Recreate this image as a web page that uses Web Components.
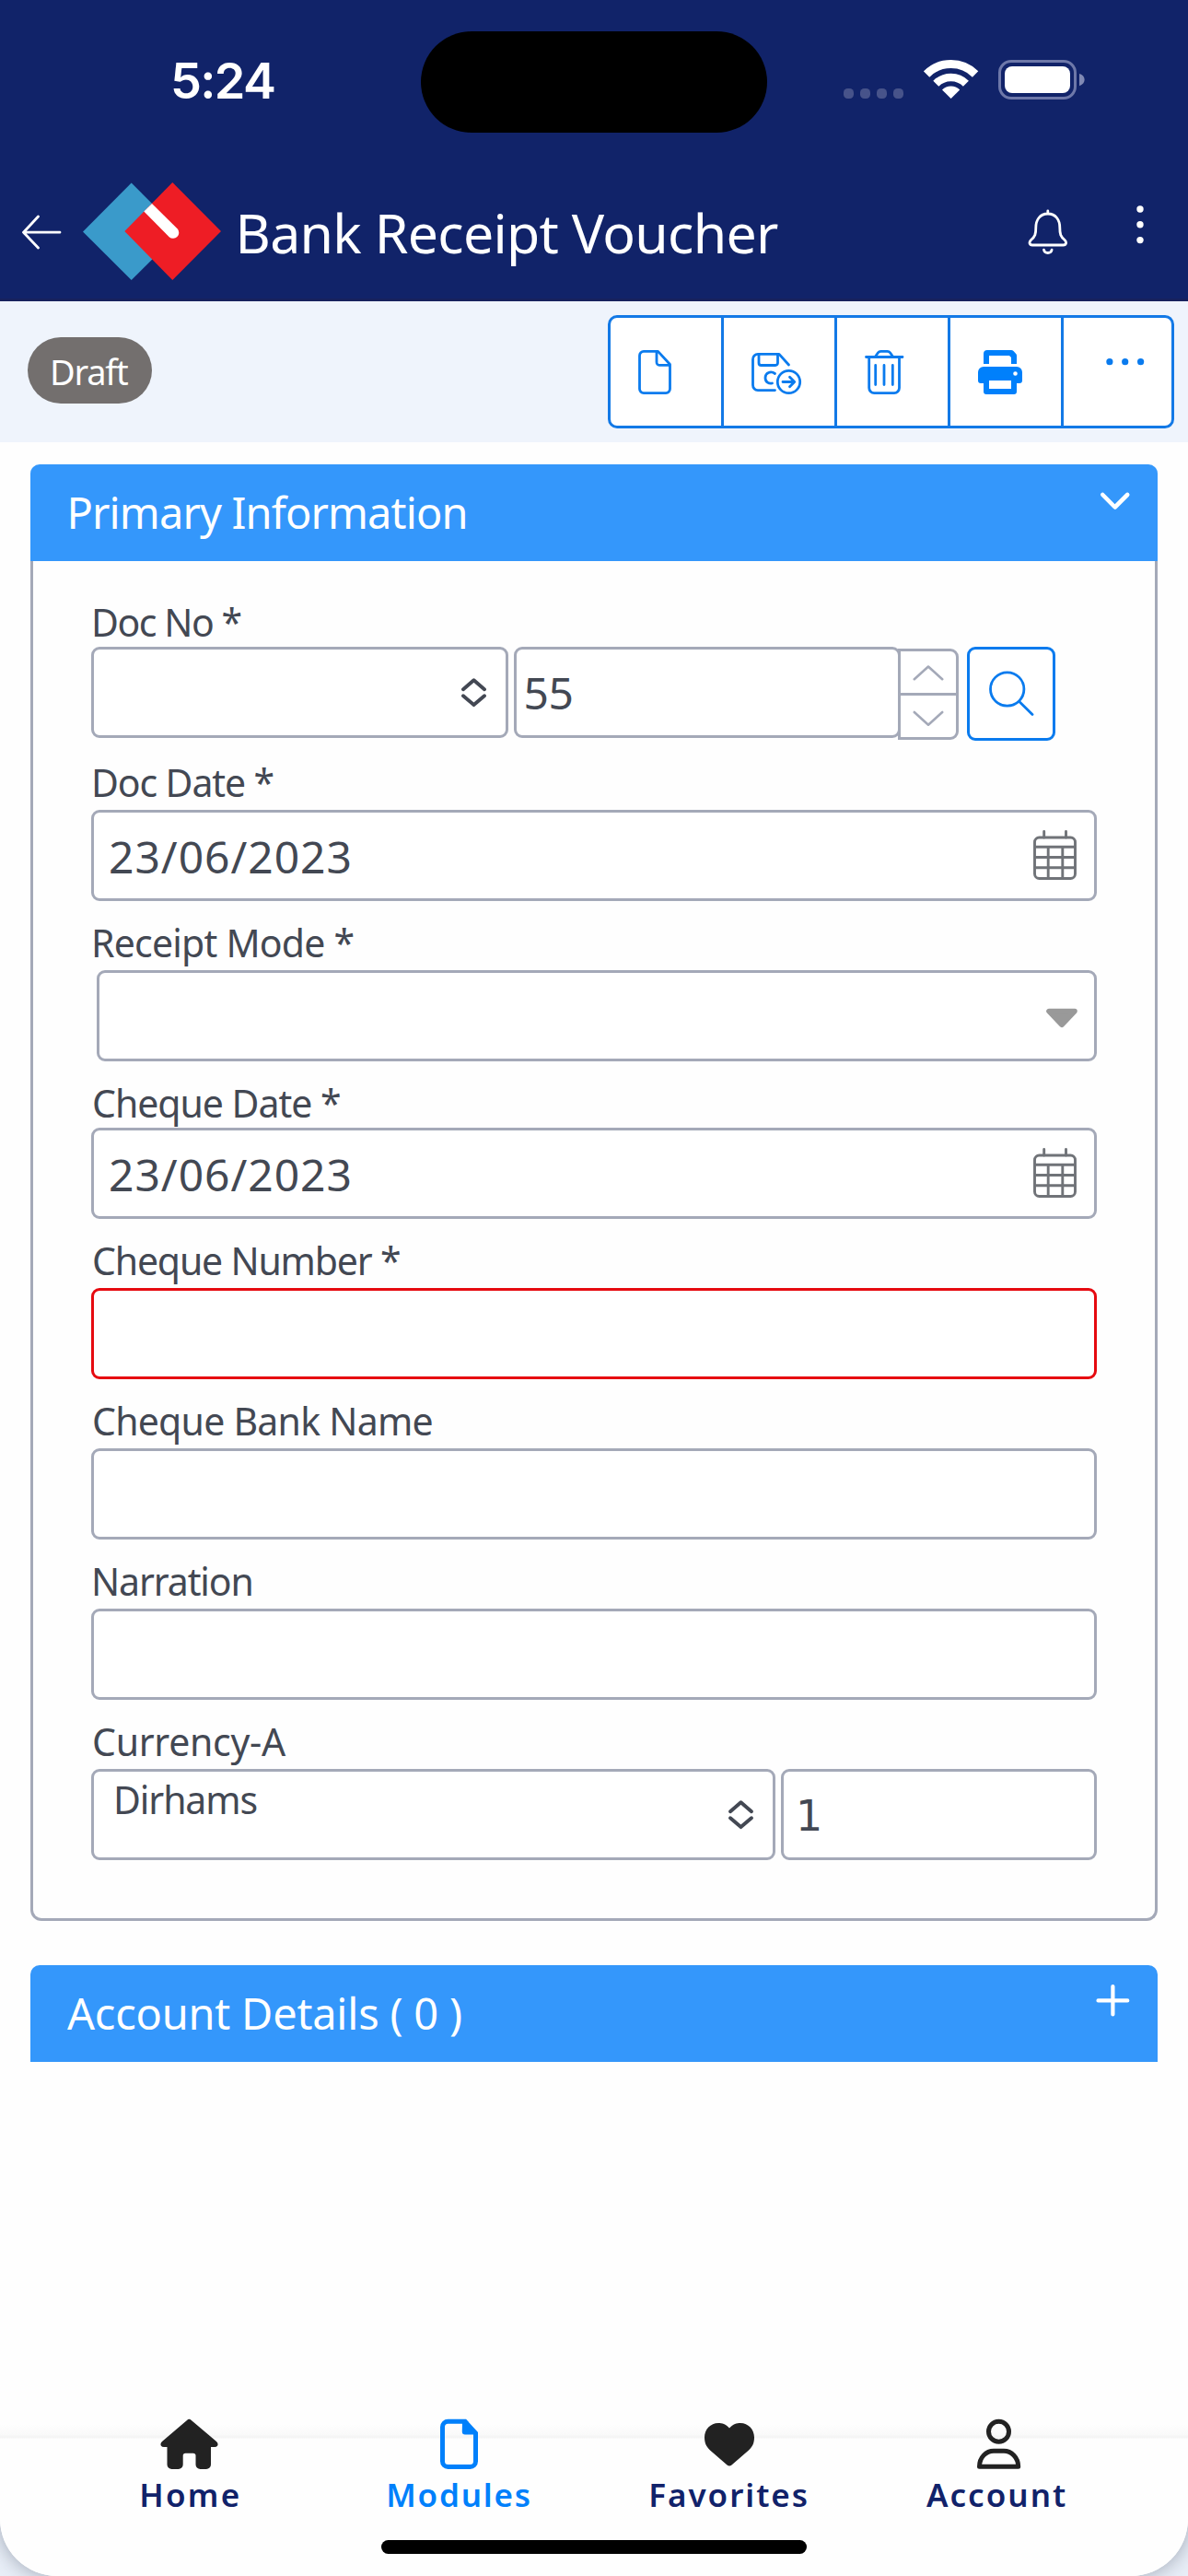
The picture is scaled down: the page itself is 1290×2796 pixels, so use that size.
<!DOCTYPE html>
<html lang="en">
<head>
<meta charset="utf-8">
<title>Bank Receipt Voucher</title>
<style>
  html, body { margin: 0; padding: 0; }
  body { width: 1290px; height: 2796px; overflow: hidden; background: #e9eff8; font-family: "Noto Sans", sans-serif; color: #434853; }
</style>
</head>
<body>
<voucher-app>
  <status-bar></status-bar>
  <app-bar>Bank Receipt Voucher</app-bar>
  <action-bar>Draft</action-bar>
  <section-card heading="Primary Information" w="429" icon="chevron" open>
    <form-field label="Doc No *" w="159.5" gap="4" first>
      <input-box style="width:453px"><ui-icon name="sort" style="margin:30px 20px 0 auto"></ui-icon></input-box>
      <input-box style="width:420px;margin-left:6px"><fit-text size="48" lh="60" w="49" style="margin:16px 0 0 10.5px">55</fit-text></input-box>
      <number-spinner></number-spinner>
      <search-button></search-button>
    </form-field>
    <form-field label="Doc Date *" w="194.5" style="--top:23px">
      <input-box><fit-text size="48" lh="60" w="259.5" style="margin:17px 0 0 18px">23/06/2023</fit-text><ui-icon name="calendar" style="margin:18px 17px 0 auto"></ui-icon></input-box>
    </form-field>
    <form-field label="Receipt Mode *" w="281.5">
      <input-box style="margin-left:6px"><ui-icon name="caret" style="margin:37px 17px 0 auto"></ui-icon></input-box>
    </form-field>
    <form-field label="Cheque Date *" w="267" gap="4">
      <input-box><fit-text size="48" lh="60" w="259.5" style="margin:17px 0 0 18px">23/06/2023</fit-text><ui-icon name="calendar" style="margin:18px 17px 0 auto"></ui-icon></input-box>
    </form-field>
    <form-field label="Cheque Number *" w="332"><input-box invalid></input-box></form-field>
    <form-field label="Cheque Bank Name" w="367.5"><input-box></input-box></form-field>
    <form-field label="Narration" w="171.5"><input-box></input-box></form-field>
    <form-field label="Currency-A" w="209">
      <input-box style="width:743px"><fit-text size="41" lh="48" w="152.5" style="margin:5px 0 0 24px">Dirhams</fit-text><ui-icon name="sort" style="margin:30px 20px 0 auto"></ui-icon></input-box>
      <input-box style="width:343px;margin-left:6px"><fit-text size="46" lh="60" w="23" family="DejaVu Sans" style="margin:17px 0 0 18px">1</fit-text></input-box>
    </form-field>
  </section-card>
  <section-card heading="Account Details ( 0 )" w="428" icon="plus" style="margin-top:48px"></section-card>
  <tab-bar>
    <tab-item icon="home" label="Home" w="104.5" shift="1"></tab-item>
    <tab-item icon="module" label="Modules" w="152.5" active></tab-item>
    <tab-item icon="heart" label="Favorites" w="168.5"></tab-item>
    <tab-item icon="person" label="Account" w="151" shift="-3"></tab-item>
  </tab-bar>
</voucher-app>

<script>
const define = (name, html, setup) => {
  customElements.define(name, class extends HTMLElement {
    connectedCallback() {
      if (this.shadowRoot) return;
      const root = this.attachShadow({ mode: 'open' });
      root.innerHTML = typeof html === 'function' ? html(this) : html;
      if (setup) setup(this, root);
    }
  });
};

/* Icon set: [viewBox, markup]; each icon is drawn at one pixel per unit. */
const ICONS = {
  back: ['22 230 46 44', '<path d="M65 252.2H25.5M41.5 235L25.5 252.2L41.5 269" fill="none" stroke="#fff" stroke-width="2.8" stroke-linecap="round" stroke-linejoin="round"/>'],
  logo: ['89 196 152 110', '<path d="M142.7 198.5L195.500 251.500L142.700 304L90 251.500Z" fill="#3a9aca"/><path d="M187.300 198L240 251L187.300 304L135.300 251Z" fill="#ee1d25"/><path d="M156.300 229.600L165 221L192.600 248.300A6.300 6.300 0 0 1 183.700 257.200Z" fill="#fff"/>'],
  bell: ['1114 226 48 52', '<g fill="none" stroke="#fff" stroke-width="2.8" stroke-linecap="round"><path d="M1137.800 229V232M1137.800 232C1129 232 1124.800 239 1124.800 247C1124.800 254 1124 257 1119.500 260.500C1117 263 1117.800 266 1121 266H1154.600C1157.800 266 1158.600 263 1156.100 260.500C1151.600 257 1150.800 254 1150.800 247C1150.800 239 1146.600 232 1137.800 232Z"/><path d="M1133.500 271.200C1134.500 275.600 1141.100 275.600 1142.100 271.200"/></g>'],
  kebab: ['1233 222 10 44', '<g fill="#fff"><circle cx="1238" cy="227" r="3.700"/><circle cx="1238" cy="243.800" r="3.700"/><circle cx="1238" cy="260.600" r="3.700"/></g>'],
  file: ['691 378 40 52', '<path d="M713 381.400H699A4.500 4.500 0 0 0 694.500 386V422A4.500 4.500 0 0 0 699 426.600H723A4.500 4.500 0 0 0 727.500 422V395.500L714.500 381.400H713V393A3 3 0 0 0 716 396.300H727.300" fill="none" stroke="#0a7bee" stroke-width="2.800" stroke-linejoin="round"/>'],
  save: ['814 380 58 50', '<g fill="none" stroke="#0a7bee" stroke-width="2.800" stroke-linecap="round" stroke-linejoin="round"><path d="M841.500 423.600H823A5.500 5.500 0 0 1 817.500 418V390A5.500 5.500 0 0 1 823 384.400H846L856.500 396"/><path d="M824 385V394A2.500 2.500 0 0 0 826.500 396.500H842A2.500 2.500 0 0 0 844.500 394V385"/><path d="M841.500 405.500C837 402.200 831 404.500 831 410C831 415 835 416.800 838.500 416"/><circle cx="856.500" cy="414.500" r="12.200"/><path d="M850 414.500H862.500M857.500 409.200L862.700 414.500L857.500 419.800"/></g>'],
  trash: ['937 378 46 52', '<g fill="none" stroke="#0a7bee" stroke-width="2.800" stroke-linecap="round" stroke-linejoin="round"><path d="M940.500 387.500H980M950.500 387L953.500 382.800Q954.500 381.400 956.500 381.400H963.500Q965.500 381.400 966.500 382.800L969.500 387M943.700 388V421A5.600 5.600 0 0 0 949.300 426.600H970.900A5.600 5.600 0 0 0 976.500 421V388M950.700 396.500V417.500M960 396.500V417.500M969.300 396.500V417.500"/></g>'],
  printer: ['1060 378 52 52', '<g fill="#0080fb"><path d="M1068 395V384A4 4 0 0 1 1072 380H1098Q1099.500 380 1100.500 381L1103 383.700Q1104 384.700 1104 386V395H1098V388L1096 386H1074V395Z"/><path fill-rule="evenodd" d="M1068 398H1104A6 6 0 0 1 1110 404V413A3 3 0 0 1 1107 416H1104V425A3 3 0 0 1 1101 428H1071A3 3 0 0 1 1068 425V416H1065A3 3 0 0 1 1062 413V404A6 6 0 0 1 1068 398ZM1074 413V422H1098V413ZM1102.500 403.200A2.300 2.300 0 1 0 1102.500 407.800A2.300 2.300 0 1 0 1102.500 403.200Z"/></g>'],
  dots: ['1201 388 42 10', '<g fill="#0a7bee"><circle cx="1204.900" cy="392.700" r="3.600"/><circle cx="1221.700" cy="392.700" r="3.600"/><circle cx="1238.600" cy="392.700" r="3.600"/></g>'],
  chevron: ['1192 531 38 26', '<path d="M1197.300 537L1210.700 550.500L1224.200 537" fill="none" stroke="#fff" stroke-width="4.600" stroke-linecap="round" stroke-linejoin="round"/>'],
  plus: ['1188 2152 40 38', '<path d="M1192.500 2171.400H1224.300M1208.400 2156V2186.500" fill="none" stroke="#fff" stroke-width="4.200" stroke-linecap="round"/>'],
  sort: ['500 735 29 33', '<path d="M503 748.200L514.500 738.300L526 748.200M503 755.200L514.500 765.100L526 755.200" fill="none" stroke="#434853" stroke-width="3.900" stroke-linecap="round" stroke-linejoin="round"/>'],
  up: ['990 720 36 20', '<path d="M992.800 737.200L1008 723.500L1023.200 737.200" fill="none" stroke="#a4a9b8" stroke-width="2.600" stroke-linecap="round" stroke-linejoin="round"/>'],
  down: ['990 770 36 20', '<path d="M992.800 773L1008 786.700L1023.200 773" fill="none" stroke="#a4a9b8" stroke-width="2.600" stroke-linecap="round" stroke-linejoin="round"/>'],
  search: ['1072 727 53 52', '<g fill="none" stroke="#0a7bee" stroke-width="2.800" stroke-linecap="round"><circle cx="1093.700" cy="748" r="18.200"/><path d="M1106.800 761.500L1121 775.600"/></g>'],
  calendar: ['1121 900 50 56', '<g fill="none" stroke="#707378" stroke-width="2.900"><rect x="1123.500" y="909" width="44" height="44.500" rx="5"/><path d="M1123.500 919.300H1167.500M1123.500 930.500H1167.500M1123.500 941.800H1167.500M1138.200 919V953.500M1153.800 919V953.500"/><path d="M1133.700 902.500V909M1157.500 902.500V909" stroke-linecap="round"/></g>'],
  caret: ['1135 1093 36 24', '<path d="M1139 1097.500H1167L1153 1112.300Z" fill="#999" stroke="#999" stroke-width="5.600" stroke-linejoin="round"/>'],
  wifi: ['1003 63 60 46', '<g fill="none" stroke="#fff"><path d="M1006.100 80.500A37.500 37.500 0 0 1 1059.100 80.500" stroke-width="9"/><path d="M1016.300 90.700A23 23 0 0 1 1048.900 90.700" stroke-width="8.500"/></g><path d="M1032.600 107L1023 97.600A13.500 13.500 0 0 1 1042.200 97.600Z" fill="#fff"/>'],
  battery: ['1082 63 98 47', '<rect x="1085.500" y="66.500" width="82" height="40" rx="12.500" fill="none" stroke="#6e78a9" stroke-width="3"/><rect x="1091" y="72" width="71" height="29" rx="8" fill="#fff"/><path d="M1172 80C1179.500 82 1179.500 91 1172 93.200Z" fill="#8089b4"/>'],
  home: ['173 2625 65 57', '<path d="M203 2626.900Q205.400 2624.700 207.800 2626.900L235 2650Q237.500 2652.500 236 2654.800Q235.200 2656 233 2656H229V2675A5 5 0 0 1 224 2680H217.500A5 5 0 0 1 212.500 2675V2665.500Q212.500 2662.700 209.700 2662.700H201.500Q198.700 2662.700 198.700 2665.500V2675A5 5 0 0 1 193.700 2680H186.500A5 5 0 0 1 181.500 2675V2656H178Q175.800 2656 175 2654.800Q173.500 2652.500 176 2650Z" fill="#222"/>'],
  module: ['476 2625 45 57', '<path d="M504 2628.300H486.500A6 6 0 0 0 480.500 2634.300V2671.500A6 6 0 0 0 486.500 2677.500H510.500A6 6 0 0 0 516.500 2671.500V2641L505 2628.300Z" fill="none" stroke="#0080fb" stroke-width="5"/><path d="M502 2628H505.500L518 2641.500V2642.500H505A3.200 3.200 0 0 1 501.800 2639.300Z" fill="#0080fb"/>'],
  heart: ['762 2625 58 57', '<path d="M791 2635.500C795 2631 799 2630 803 2630C811.500 2630 818 2637 818 2645.500C818 2652 816 2655.500 812 2659.500L793.500 2675.500Q791 2677.500 788.500 2675.500L770 2659.500C766 2655.500 764 2652 764 2645.500C764 2637 770.500 2630 779 2630C783 2630 787 2631 791 2635.500Z" fill="#222"/>'],
  person: ['1058 2625 51 57', '<g fill="none" stroke="#222" stroke-width="5" stroke-linejoin="round"><circle cx="1083.500" cy="2639.200" r="11"/><path d="M1062.500 2677.300C1062.500 2667 1070 2660.200 1078 2660.200H1089C1097 2660.200 1104.700 2667 1104.700 2677.300Z"/></g>']
};

define('ui-icon', el => {
  const [box, art] = ICONS[el.getAttribute('name')];
  const [, , w, h] = box.split(' ');
  return `<style>:host{display:block;flex:none;width:${w}px;height:${h}px}svg{display:block}</style>
    <svg width="${w}" height="${h}" viewBox="${box}" aria-hidden="true">${art}</svg>`;
});

/* Text whose tracking is adjusted so that its ink fills the given width. */
const pen = document.createElement('canvas').getContext('2d');
define('fit-text', '<style>:host{display:block;flex:none;white-space:nowrap}span{display:inline-block;white-space:pre}</style><span><slot></slot></span>', (el, root) => {
  const a = n => el.getAttribute(n);
  const text = el.textContent, size = +a('size'), w = +a('w');
  const font = `${a('weight') || 400} ${size}px "${a('family') || 'Noto Sans'}", sans-serif`;
  pen.font = font;
  const m = pen.measureText(text);
  const ink = m.actualBoundingBoxLeft + m.actualBoundingBoxRight;
  const span = root.querySelector('span');
  span.style.font = font;
  span.style.lineHeight = +a('lh') + 2 + 'px';
  span.style.marginLeft = m.actualBoundingBoxLeft + 'px';
  if (text.length > 1) span.style.letterSpacing = (w - ink) / (text.length - 1) + 'px';
  el.style.width = w + 'px';
  el.style.height = a('lh') + 'px';
});

define('voucher-app', `<style>
  :host{display:flex;flex-direction:column;width:1290px;height:2796px;box-sizing:border-box;background:#fefefe;border-radius:0 0 62px 62px;overflow:hidden;box-shadow:0 0 22px rgba(60,70,90,.45)}
</style><slot></slot>`);

define('status-bar', `<style>
  :host{display:flex;align-items:flex-start;height:176px;background:#112369;color:#fff;box-sizing:border-box}
  .island{width:376px;height:110px;border-radius:55px;background:#000;margin:34px 0 0 159px}
  .cell{display:flex;gap:7px;margin:96px 0 0 83px}
  .cell i{width:11px;height:11px;border-radius:4.500px;background:#47538a}
</style>
<fit-text size="54" lh="60" w="110" weight="600" family="Inter" style="margin:57px 0 0 188px">5:24</fit-text>
<div class="island"></div>
<div class="cell"><i></i><i></i><i></i><i></i></div>
<ui-icon name="wifi" style="margin:63px 0 0 22px"></ui-icon>
<ui-icon name="battery" style="margin:63px 0 0 19px"></ui-icon>`);

define('app-bar', el => `<style>
  :host{display:flex;align-items:flex-start;height:151px;box-sizing:border-box;background:#112369;border-bottom:3px solid #17215d;color:#fff}
</style>
<ui-icon name="back" style="margin:54px 0 0 22px"></ui-icon>
<ui-icon name="logo" style="margin:20px 0 0 21px"></ui-icon>
<fit-text size="59" lh="70" w="584.500" style="margin:40px 0 0 19.500px">${el.textContent}</fit-text>
<ui-icon name="bell" style="margin:50px 0 0 269px"></ui-icon>
<ui-icon name="kebab" style="margin:46px 0 0 71px"></ui-icon>`);

define('action-bar', el => `<style>
  :host{display:flex;align-items:flex-start;justify-content:space-between;height:153px;box-sizing:border-box;padding:15px 15px 0 30px;background:#eff4fc}
  .pill{margin-top:24px;width:135px;height:72px;box-sizing:border-box;padding:13px 0 0 27px;border-radius:36px;background:#736f6e;color:#fff}
  .group{display:flex;width:615px;height:123px;box-sizing:border-box;border:3px solid #1379e6;border-radius:10px;background:#fff}
  .btn{width:120px;border-right:3px solid #1379e6;display:flex;align-items:flex-start}
  .btn:last-child{width:117px;border:0}
</style>
<div class="pill"><fit-text size="38" lh="46" w="82">${el.textContent}</fit-text></div>
<div class="group">
  <div class="btn"><ui-icon name="file" style="margin:33px 0 0 28px"></ui-icon></div>
  <div class="btn"><ui-icon name="save" style="margin:35px 0 0 28px"></ui-icon></div>
  <div class="btn"><ui-icon name="trash" style="margin:33px 0 0 28px"></ui-icon></div>
  <div class="btn"><ui-icon name="printer" style="margin:33px 0 0 28px"></ui-icon></div>
  <div class="btn"><ui-icon name="dots" style="margin:43px 0 0 46px"></ui-icon></div>
</div>`);

define('section-card', el => {
  const open = el.hasAttribute('open'), plus = el.getAttribute('icon') === 'plus';
  return `<style>
  :host{display:block;margin:24px 33px 0}
  header{display:flex;align-items:flex-start;justify-content:space-between;height:105px;background:#3497fb;color:#fff;border-radius:10px 10px 0 0}
  .body{height:1476px;box-sizing:border-box;border:3px solid #a4a9b8;border-top:0;border-radius:0 0 12px 12px;padding:41px 0 0 63px}
</style>
<header><fit-text size="47" lh="56" w="${el.getAttribute('w')}" style="margin:23px 0 0 ${plus ? 40 : 43.500}px">${el.getAttribute('heading')}</fit-text>
<ui-icon name="${el.getAttribute('icon')}" style="margin:${plus ? '19px 29px' : '27px 27px'} 0 0"></ui-icon></header>
${open ? '<div class="body"><slot></slot></div>' : ''}`;
});

define('form-field', el => `<style>
  :host{display:block;width:1092px;margin-top:var(--top,20px)}
  :host([first]){margin-top:0}
  .row{display:flex;align-items:flex-start;height:99px;margin-top:${el.getAttribute('gap') || 7}px}
</style>
<fit-text size="41" lh="48" w="${el.getAttribute('w')}" style="margin-left:3px">${el.getAttribute('label')}</fit-text>
<div class="row"><slot></slot></div>`);

define('input-box', `<style>
  :host{display:flex;flex:0 1 auto;align-items:flex-start;width:1092px;height:99px;box-sizing:border-box;border:3px solid #a4a9b8;border-radius:9px;background:#fff}
  :host([invalid]){border-color:#e60a10}
</style><slot></slot>`);

define('number-spinner', `<style>
  :host{display:flex;flex-direction:column;flex:none;width:66px;height:99px;box-sizing:border-box;margin:2px 0 0 -3px;border:3px solid #a4a9b8;border-radius:0 9px 9px 0;background:#fff}
  div{display:flex;justify-content:center}
  .a{height:45px;border-bottom:3px solid #a4a9b8}
</style>
<div class="a"><ui-icon name="up" style="margin-top:13px"></ui-icon></div>
<div><ui-icon name="down" style="margin-top:15px"></ui-icon></div>`);

define('search-button', `<style>
  :host{display:flex;flex:none;align-items:flex-start;width:96px;height:102px;box-sizing:border-box;margin-left:9px;border:3px solid #0a7bee;border-radius:9px;background:#fff}
</style><ui-icon name="search" style="margin:22px 0 0 19px"></ui-icon>`);

define('tab-bar', `<style>
  :host{display:flex;flex-direction:column;height:176px;margin-top:auto;background:linear-gradient(#fefefe 0,#fefefe 12px,#f9f9f9 23px,#f5f5f5 24px,#f5f5f5 26px,#fefefe 27px)}
  nav{display:flex;height:137px;padding:0 59px}
  .handle{width:462px;height:15px;border-radius:8px;background:#000;margin-left:414px}
</style>
<nav><slot></slot></nav><div class="handle"></div>`);

define('tab-item', el => `<style>
  :host{display:flex;flex:1;flex-direction:column;align-items:center;padding-top:5px;color:#11226a}
  :host([active]){color:#0080fb}
</style>
<ui-icon name="${el.getAttribute('icon')}"></ui-icon>
<fit-text size="35" lh="44" weight="600" w="${el.getAttribute('w')}" style="margin:3px 0 0 ${2 * (el.getAttribute('shift') || 0)}px">${el.getAttribute('label')}</fit-text>`);
</script>
</body>
</html>
